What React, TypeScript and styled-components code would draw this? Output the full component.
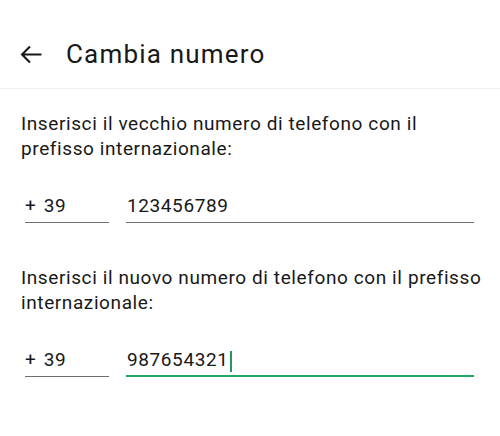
import styled, { createGlobalStyle } from "styled-components";

const GlobalStyle = createGlobalStyle`
	html, body {
		margin: 0;
		padding: 0;
		background: #ffffff;
	}
	body {
		font-family: Roboto, "Noto Sans", Arial, sans-serif;
		color: #181818;
	}
`;

type PhoneRowProps = {
	prefix: string;
	number: string;
	active?: boolean;
};

const PhoneRow = ({ prefix, number, active }: PhoneRowProps) => {
	return (
		<Row>
			<PrefixField>+&nbsp;{prefix}</PrefixField>
			<NumberField $active={active}>
				{number}
				{active && <Caret />}
			</NumberField>
		</Row>
	);
};

const App = () => {
	return (
		<Page>
			<GlobalStyle />
			<Header>
				<BackButton aria-label="Indietro">
					<svg width="22" height="19" viewBox="0 0 22 19" fill="none">
						<path
							d="M21.5 9.5H2M10 1.5L2 9.5l8 8"
							stroke="#181818"
							strokeWidth="2.1"
						/>
					</svg>
				</BackButton>
				<Title>Cambia numero</Title>
			</Header>
			<Content>
				<Label>Inserisci il vecchio numero di telefono con il prefisso internazionale:</Label>
				<PhoneRow prefix="39" number="123456789" />
				<Label>Inserisci il nuovo numero di telefono con il prefisso internazionale:</Label>
				<PhoneRow prefix="39" number="987654321" active />
			</Content>
		</Page>
	);
};

const Page = styled.div`
	width: 500px;
	height: 436px;
	background: #ffffff;
	overflow: hidden;
`;

const Header = styled.header`
	display: flex;
	align-items: center;
	height: 89px;
	padding: 20px 0 0 20px;
	box-sizing: border-box;
	border-bottom: 1px solid #f1f1f1;
`;

const BackButton = styled.button`
	display: flex;
	align-items: center;
	padding: 0;
	margin: 0 24px 0 0;
	border: none;
	background: none;
	cursor: pointer;
`;

const Title = styled.h1`
	margin: 0;
	font-size: 26px;
	line-height: 30px;
	font-weight: 400;
	letter-spacing: 1.2px;
	color: #181818;
`;

const Content = styled.main`
	padding: 22px 14px 0 21px;
`;

const Label = styled.p`
	margin: 0;
	font-size: 19px;
	line-height: 25px;
	letter-spacing: 0.6px;
	color: #181818;
`;

const Row = styled.div`
	display: flex;
	gap: 17px;
	margin: 33px 12px 42px 4px;
`;

const Field = styled.div`
	font-size: 19px;
	line-height: 24px;
	letter-spacing: 0.6px;
	color: #181818;
`;

const PrefixField = styled(Field)`
	width: 84px;
	flex: none;
	box-sizing: border-box;
	padding-bottom: 4px;
	word-spacing: 2px;
	border-bottom: 1px solid #6f6f6f;
`;

const NumberField = styled(Field)<{ $active?: boolean }>`
	flex: 1;
	display: flex;
	align-items: center;
	padding-left: 1px;
	padding-bottom: ${(p) => (p.$active ? "3px" : "4px")};
	border-bottom: ${(p) => (p.$active ? "2px solid #22a565" : "1px solid #6f6f6f")};
`;

const Caret = styled.span`
	display: inline-block;
	width: 2px;
	height: 21px;
	margin: 2px 0 0 1px;
	background: #1d9a5c;
`;

export default App;
